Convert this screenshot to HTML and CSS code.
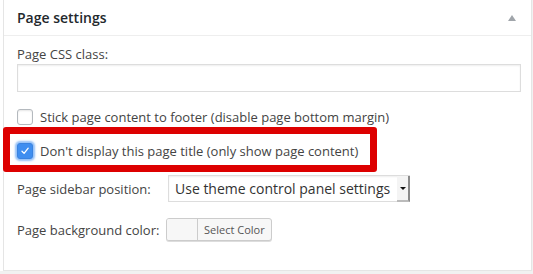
FILE: index.html
```html
<!DOCTYPE html>
<html>

<head>
    <meta charset="UTF-8">
    <title>Page settings</title>
    <link rel="stylesheet" href="styles.css">
</head>

<body>
    <div class="postbox">
        <div class="postbox-header">
            <h2>Page settings</h2>
            <span class="toggle-arrow"></span>
        </div>
        <div class="inside">
            <label class="field-label" for="pageClass">Page CSS class:</label>
            <input type="text" id="pageClass" class="text-input">

            <label class="check-row">
                <span class="checkbox"></span>
                Stick page content to footer (disable page bottom margin)
            </label>

            <div class="highlight">
                <label class="check-row">
                    <span class="checkbox checked">
                        <svg width="10" height="10" viewBox="0 0 10 10">
                            <path d="M2 5.3 L4.1 7.4 L8.2 2.2" fill="none" stroke="#fff" stroke-width="1.3" stroke-linecap="round" stroke-linejoin="round" />
                        </svg>
                    </span>
                    Don't display this page title (only show page content)
                </label>
            </div>

            <div class="option-row sidebar-row">
                <span class="option-label">Page sidebar position:</span>
                <div class="select-box">
                    <span class="select-value">Use theme control panel settings</span>
                    <span class="select-arrow"></span>
                </div>
            </div>

            <div class="option-row color-row">
                <span class="option-label">Page background color:</span>
                <button class="color-btn">
                    <span class="swatch"></span>
                    <span class="color-text">Select Color</span>
                </button>
            </div>
        </div>
    </div>
</body>

</html>
```

FILE: styles.css
```css
body {
    margin: 0;
    background: #f1f1f1;
    font-family: 'Open Sans', 'Noto Sans', sans-serif;
    font-size: 13px;
    color: #444;
}

.postbox {
    width: 527px;
    margin-left: 3px;
    background: #fff;
    border: 1px solid #e5e5e5;
    border-top: none;
    box-shadow: -3px 0 0 #fff;
}

.postbox-header {
    height: 36px;
    display: flex;
    align-items: center;
    justify-content: space-between;
    padding: 0 13px;
    border-bottom: 1px solid #eee;
    box-sizing: border-box;
}

.postbox-header h2 {
    margin: 0;
    font-size: 14px;
    font-weight: 600;
    color: #23282d;
}

.toggle-arrow {
    width: 0;
    height: 0;
    margin-right: 2px;
    border-left: 4px solid transparent;
    border-right: 4px solid transparent;
    border-bottom: 6px solid #a0a5aa;
}

.inside {
    padding: 8px 10px 29px 13px;
}

.field-label {
    display: block;
    line-height: 20px;
}

.text-input {
    display: block;
    width: 100%;
    height: 28px;
    margin: 0;
    box-sizing: border-box;
    border: 1px solid #ddd;
    box-shadow: inset 0 1px 2px rgba(0, 0, 0, 0.07);
}

.check-row {
    display: flex;
    align-items: center;
    line-height: 20px;
    margin-top: 15px;
}

.checkbox {
    width: 16px;
    height: 16px;
    box-sizing: border-box;
    margin-right: 7px;
    border: 1px solid #b4b9be;
    border-radius: 3px;
    background: #fff;
    box-shadow: inset 0 1px 2px rgba(0, 0, 0, 0.1);
    display: flex;
    align-items: center;
    justify-content: center;
}

.checkbox.checked {
    background: #3f8ef0;
    border-color: #3a83e0;
    box-shadow: 0 0 2px 2px rgba(60, 140, 240, 0.55);
}

.highlight {
    width: 374px;
    height: 45px;
    box-sizing: border-box;
    margin-left: -14px;
    padding-left: 7px;
    border: 7px solid #dd0000;
    border-radius: 3px;
    display: flex;
    align-items: center;
}

.highlight .check-row {
    margin-top: 2px;
}

.option-row {
    display: flex;
    align-items: center;
}

.option-label {
    flex-shrink: 0;
}

.sidebar-row {
    margin-top: 3px;
}

.sidebar-row .option-label {
    width: 151px;
}

.color-row {
    margin-top: 16px;
}

.color-row .option-label {
    width: 149px;
}

.select-box {
    width: 242px;
    height: 27px;
    box-sizing: border-box;
    display: flex;
    align-items: center;
    justify-content: space-between;
    padding-left: 6px;
    border: 1px solid #ddd;
    border-right: none;
    background: #fff;
    box-shadow: inset 0 1px 2px rgba(0, 0, 0, 0.07);
}

.select-value {
    font-size: 14px;
    color: #333;
    white-space: nowrap;
}

.select-arrow {
    width: 11px;
    height: 24px;
    align-self: flex-start;
    background: #f4f4f4;
    border-right: 2px solid #8a8a8a;
    border-bottom: 2px solid #bbb;
    position: relative;
}

.select-arrow::after {
    content: "";
    position: absolute;
    left: 3px;
    top: 11px;
    border-left: 3px solid transparent;
    border-right: 3px solid transparent;
    border-top: 3px solid #111;
}

.color-btn {
    display: flex;
    align-items: stretch;
    height: 23px;
    padding: 0;
    margin: 0;
    border: 1px solid #ccc;
    border-radius: 3px;
    background: #f7f7f7;
    box-shadow: 0 1px 0 #ddd;
    font-family: inherit;
    overflow: hidden;
}

.swatch {
    width: 30px;
    border-right: 1px solid #ccc;
    background: #f7f7f7;
}

.color-text {
    display: flex;
    align-items: center;
    padding: 0 6px;
    font-size: 11px;
    color: #555;
}
```
